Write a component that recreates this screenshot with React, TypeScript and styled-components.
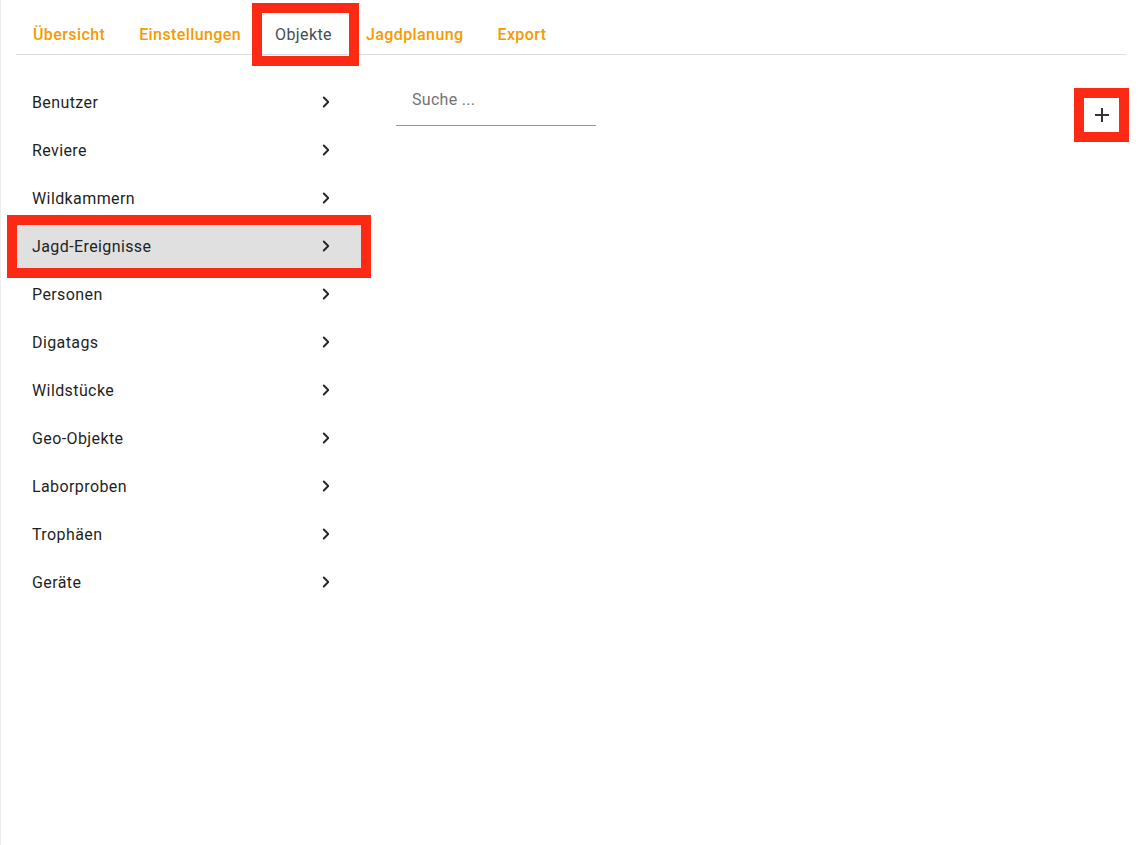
import { FC } from "react";
import styled, { createGlobalStyle } from "styled-components";

const GlobalStyle = createGlobalStyle`
  html, body {
    margin: 0;
    padding: 0;
    background: #fff;
  }
  body {
    font-family: Roboto, "Liberation Sans", sans-serif;
    color: #222;
  }
`;

const Page = styled.div`
  min-height: 845px;
  box-sizing: border-box;
  border-left: 1px solid #ececec;
  padding: 14px 12px 0 15px;
`;

const TabBar = styled.nav`
  display: flex;
  height: 40px;
  border-bottom: 1px solid #d8dde2;
`;

const Tab = styled.div<{ $active?: boolean }>`
  position: relative;
  display: flex;
  align-items: center;
  padding: 0 17px;
  font-size: 16px;
  font-weight: 500;
  letter-spacing: 0.4px;
  color: ${(p) => (p.$active ? "#454b52" : "#f59a00")};
  cursor: pointer;

  ${(p) =>
    p.$active &&
    `
    font-weight: 400;
    &::after {
      content: "";
      position: absolute;
      top: -11px;
      bottom: -12px;
      left: -6px;
      right: -10px;
      border: 10px solid #fc2a14;
      pointer-events: none;
    }
  `}
`;

const Body = styled.div`
  display: flex;
  align-items: flex-start;
  gap: 34px;
  margin-top: 23px;
`;

const Sidebar = styled.ul`
  list-style: none;
  margin: 0;
  padding: 0;
  width: 346px;
`;

const SideItem = styled.li<{ $selected?: boolean }>`
  position: relative;
  display: flex;
  align-items: center;
  justify-content: space-between;
  height: 48px;
  padding: 0 27px 0 16px;
  font-size: 16px;
  letter-spacing: 0.4px;
  color: #1f1f1f;
  background: ${(p) => (p.$selected ? "#e0e0e0" : "transparent")};
  cursor: pointer;

  ${(p) =>
    p.$selected &&
    `
    &::after {
      content: "";
      position: absolute;
      top: -7px;
      bottom: -8px;
      left: -9px;
      right: -9px;
      border: 10px solid #fc2a14;
      pointer-events: none;
    }
  `}
`;

const Chevron = styled.svg`
  width: 18px;
  height: 18px;
`;

const Main = styled.div`
  flex: 1;
  display: flex;
  align-items: flex-start;
`;

const SearchInput = styled.input`
  width: 200px;
  height: 48px;
  box-sizing: border-box;
  border: none;
  border-bottom: 1px solid #949494;
  padding: 0 16px 4px;
  font-family: Roboto, "Liberation Sans", sans-serif;
  font-size: 16px;
  letter-spacing: 0.3px;
  color: #222;
  outline: none;
  background: transparent;

  &::placeholder {
    color: #737373;
  }
`;

const AddButton = styled.button`
  position: relative;
  margin: 20px 7px 0 auto;
  width: 35px;
  height: 34px;
  display: flex;
  align-items: center;
  justify-content: center;
  border: none;
  background: #fff;
  padding: 0;
  cursor: pointer;

  &::after {
    content: "";
    position: absolute;
    inset: -10px;
    border: 10px solid #fc2a14;
    pointer-events: none;
  }
`;

const tabs = ["Übersicht", "Einstellungen", "Objekte", "Jagdplanung", "Export"];

const objects = [
  "Benutzer",
  "Reviere",
  "Wildkammern",
  "Jagd-Ereignisse",
  "Personen",
  "Digatags",
  "Wildstücke",
  "Geo-Objekte",
  "Laborproben",
  "Trophäen",
  "Geräte",
];

const App: FC = () => {
  return (
    <>
      <GlobalStyle />
      <Page>
        <TabBar>
          {tabs.map((tab) => (
            <Tab key={tab} $active={tab === "Objekte"}>
              {tab}
            </Tab>
          ))}
        </TabBar>
        <Body>
          <Sidebar>
            {objects.map((item) => (
              <SideItem key={item} $selected={item === "Jagd-Ereignisse"}>
                {item}
                <Chevron viewBox="0 0 24 24">
                  <path
                    d="M9 6l6 6-6 6"
                    fill="none"
                    stroke="#222"
                    strokeWidth="2.4"
                    strokeLinecap="round"
                    strokeLinejoin="round"
                  />
                </Chevron>
              </SideItem>
            ))}
          </Sidebar>
          <Main>
            <SearchInput placeholder="Suche ..." />
            <AddButton aria-label="Hinzufügen">
              <svg width="18" height="18" viewBox="0 0 18 18">
                <path d="M9 2v14M2 9h14" stroke="#333" strokeWidth="2" />
              </svg>
            </AddButton>
          </Main>
        </Body>
      </Page>
    </>
  );
};

export default App;
